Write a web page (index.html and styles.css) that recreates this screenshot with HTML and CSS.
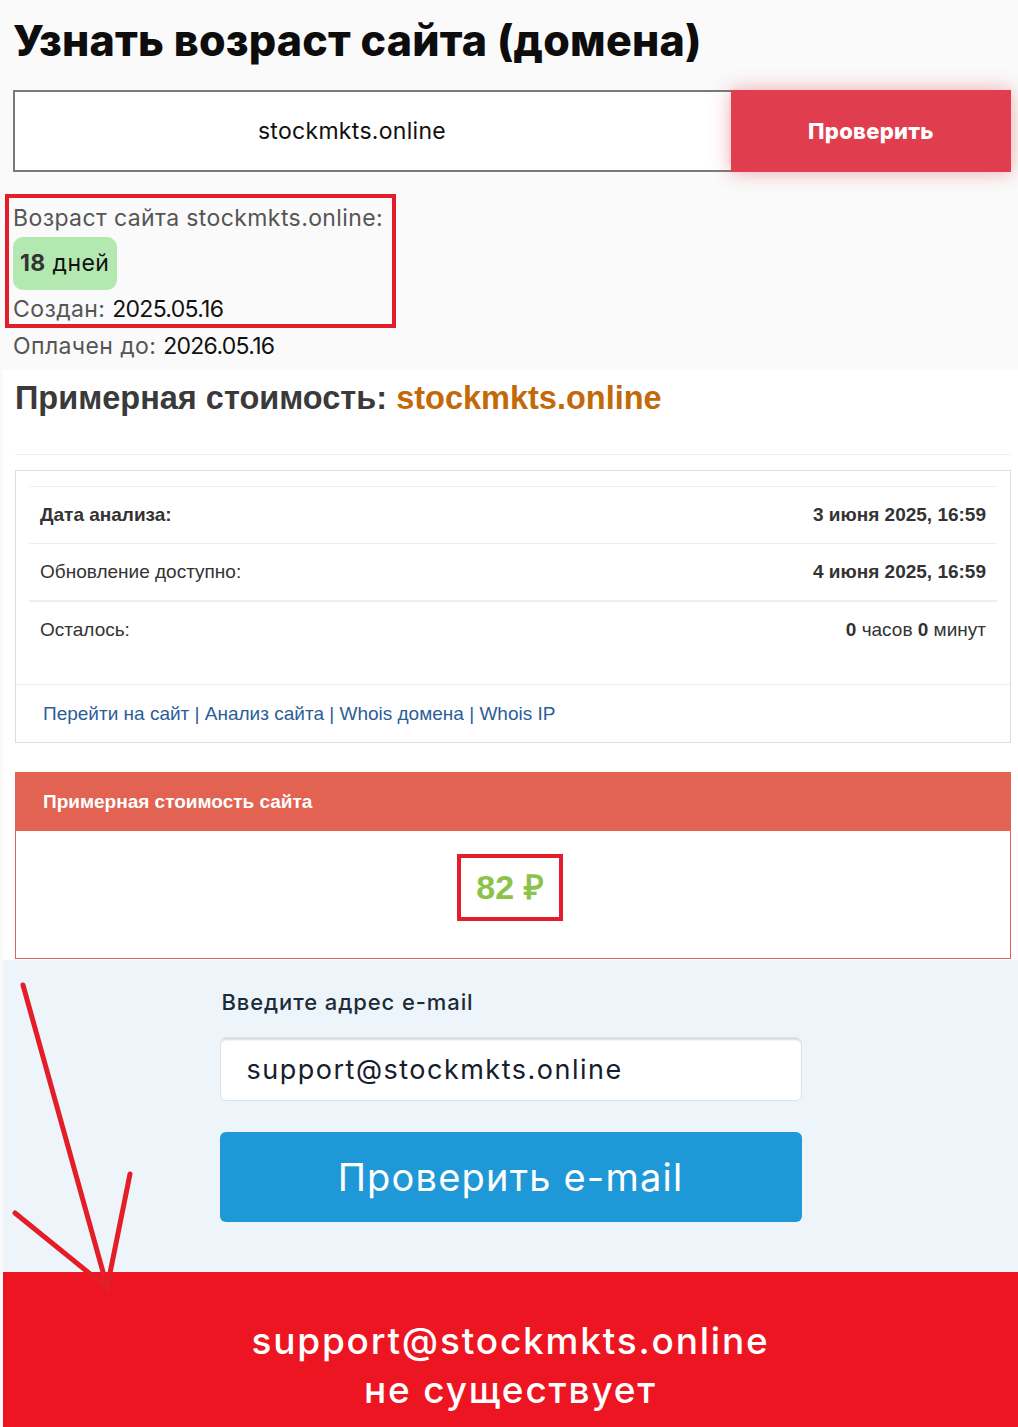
FILE: index.html
```html
<!DOCTYPE html>
<html lang="ru">
<head>
    <meta charset="UTF-8">
    <meta name="viewport" content="width=device-width, initial-scale=1.0">
    <title>Узнать возраст сайта (домена)</title>
    <link rel="stylesheet" href="styles.css">
</head>
<body>
    <div class="page">
        <section class="age-section">
            <h1 class="age-title">Узнать возраст сайта (домена)</h1>

            <form class="domain-form" onsubmit="return false">
                <div class="domain-input">stockmkts.online</div>
                <button class="domain-btn" type="submit">Проверить</button>
            </form>

            <div class="age-box">
                <div class="age-line">Возраст сайта stockmkts.online:</div>
                <div class="age-badge"><b>18</b> дней</div>
                <div class="age-line">Создан: <span class="age-date">2025.05.16</span></div>
            </div>
            <div class="age-line paid">Оплачен до: <span class="age-date">2026.05.16</span></div>
        </section>

        <section class="cost-section">
            <h2 class="cost-title">Примерная стоимость: <span class="cost-domain">stockmkts.online</span></h2>
            <hr class="cost-rule">

            <div class="stats-panel">
                <div class="stats-body">
                    <div class="stats-row strong">
                        <span>Дата анализа:</span>
                        <span class="stats-value">3 июня 2025, 16:59</span>
                    </div>
                    <div class="stats-row">
                        <span>Обновление доступно:</span>
                        <span class="stats-value">4 июня 2025, 16:59</span>
                    </div>
                    <div class="stats-row">
                        <span>Осталось:</span>
                        <span><b>0</b> часов <b>0</b> минут</span>
                    </div>
                </div>
                <div class="stats-links">
                    <a href="#">Перейти на сайт</a> | <a href="#">Анализ сайта</a> | <a href="#">Whois домена</a> | <a href="#">Whois IP</a>
                </div>
            </div>

            <div class="price-card">
                <div class="price-head">Примерная стоимость сайта</div>
                <div class="price-body">
                    <span class="price-value">82 ₽</span>
                </div>
            </div>
        </section>

        <section class="email-section">
            <form class="email-form" onsubmit="return false">
                <label class="email-label" for="email">Введите адрес e-mail</label>
                <div class="email-input" id="email">support@stockmkts.online</div>
                <button class="email-btn" type="submit">Проверить e-mail</button>
            </form>
        </section>

        <section class="email-result">
            <div>support@stockmkts.online</div>
            <div>не существует</div>
        </section>

        <!-- hand-drawn arrow over the page -->
        <svg class="arrow" width="1018" height="1427" viewBox="0 0 1018 1427" aria-hidden="true">
            <g stroke="#e41e28" stroke-width="5" stroke-linecap="round" fill="none">
                <line x1="23" y1="985" x2="108" y2="1290"/>
                <line x1="130" y1="1174" x2="107" y2="1288"/>
                <line x1="15" y1="1213" x2="105" y2="1286"/>
            </g>
        </svg>
    </div>
</body>
</html>
```

FILE: styles.css
```css
body {
    margin: 0;
    background: #fafafa;
    font-family: Inter, "Open Sans", sans-serif;
    color: #111;
}

.page {
    position: relative;
    width: 1018px;
    min-height: 1427px;
    overflow: hidden;
}

/* Age check */
.age-section {
    padding: 0 0 0 13px;
    height: 370px;
    box-sizing: border-box;
}

.age-title {
    margin: 0;
    padding-top: 15px;
    height: 90px;
    box-sizing: border-box;
    font-size: 43px;
    line-height: 50px;
    font-weight: 800;
    letter-spacing: 0.2px;
    color: #0d0d0d;
}

.domain-form {
    display: flex;
    width: 998px;
    height: 82px;
}

.domain-input {
    width: 718px;
    box-sizing: border-box;
    border: 2px solid #7a7a7a;
    border-right: none;
    padding-right: 42px;
    background: #fff;
    display: flex;
    align-items: center;
    justify-content: center;
    font-size: 23px;
    letter-spacing: 0.3px;
    color: #111;
}

.domain-btn {
    width: 280px;
    border: none;
    background: #e03e4e;
    color: #fff;
    font-family: inherit;
    font-size: 22px;
    font-weight: 800;
    letter-spacing: 0.3px;
    box-shadow: 0 0 18px rgba(224, 62, 78, 0.45);
}

.age-box {
    display: inline-block;
    margin: 22px 0 0 -8px;
    padding: 3px 8px 0 4px;
    width: 391px;
    height: 134px;
    box-sizing: border-box;
    border: 4px solid #e31e2a;
}

.age-line {
    font-size: 23px;
    letter-spacing: 0.4px;
    color: #555;
    line-height: 34px;
}

.age-date {
    color: #111;
    letter-spacing: -0.7px;
}

.age-badge {
    display: inline-block;
    margin: 2px 0 2px;
    padding: 0 8px 0 7px;
    height: 53px;
    line-height: 53px;
    border-radius: 10px;
    background: #b3e8b0;
    font-size: 23px;
    letter-spacing: 0.4px;
    color: #111;
}

.age-badge b {
    color: #333;
}

.paid {
    margin-top: 1px;
}

/* Site cost */
.cost-section {
    margin-left: 3px;
    padding: 8px 7px 1px 12px;
    background: #fff;
    font-family: "Liberation Sans", Arial, sans-serif;
}

.cost-title {
    margin: 0;
    font-size: 32.5px;
    line-height: 40px;
    color: #3a3a3a;
}

.cost-domain {
    color: #c26a0a;
}

.cost-rule {
    margin: 36px 0 15px;
    border: none;
    border-top: 1px solid #eee;
}

.stats-panel {
    border: 1px solid #ddd;
    margin-bottom: 29px;
}

.stats-body {
    padding: 15px 13px 26px;
}

.stats-row {
    display: flex;
    justify-content: space-between;
    padding: 0 11px;
    height: 56px;
    align-items: center;
    border-top: 1px solid #eee;
    font-size: 19px;
    color: #333;
}

.stats-row:nth-child(3) {
    border-top-width: 2px;
}

.stats-row.strong span:first-child {
    font-weight: bold;
}

.stats-value {
    font-weight: bold;
}

.stats-links {
    border-top: 1px solid #eee;
    padding: 0 27px;
    height: 57px;
    line-height: 57px;
    font-size: 19px;
    color: #2c5d99;
}

.stats-links a {
    color: #2c5d99;
    text-decoration: none;
}

.price-card {
    border: 1px solid #e36353;
}

.price-head {
    background: #e36353;
    color: #fff;
    font-weight: bold;
    font-size: 19px;
    height: 58px;
    line-height: 58px;
    padding-left: 27px;
}

.price-body {
    height: 127px;
    box-sizing: border-box;
    padding: 23px 6px 0 0;
    display: flex;
    align-items: flex-start;
    justify-content: center;
}

.price-value {
    display: inline-block;
    width: 106px;
    height: 67px;
    line-height: 59px;
    box-sizing: border-box;
    border: 4px solid #e31e2a;
    text-align: center;
    font-size: 34px;
    font-weight: bold;
    color: #8bc34a;
}

/* E-mail check */
.email-section {
    margin-left: 3px;
    height: 312px;
    background: #eef5fa;
    display: flex;
    justify-content: center;
}

.email-form {
    width: 582px;
    padding-top: 29px;
    display: flex;
    flex-direction: column;
}

.email-label {
    padding-left: 2px;
    font-size: 22px;
    font-weight: 500;
    letter-spacing: 0.9px;
    color: #1c2b39;
    line-height: 26px;
}

.email-input {
    margin-top: 22px;
    height: 64px;
    box-sizing: border-box;
    padding-left: 26px;
    display: flex;
    align-items: center;
    background: #fff;
    border: 1px solid #dde3e8;
    border-radius: 6px;
    box-shadow: inset 0 3px 2px -1px #d6d9dc;
    font-size: 27px;
    letter-spacing: 1.5px;
    color: #14202b;
}

.email-btn {
    margin-top: 31px;
    height: 90px;
    border: none;
    border-radius: 6px;
    background: #1e98d6;
    color: #fff;
    font-family: inherit;
    font-size: 38px;
    letter-spacing: 1.2px;
}

.email-result {
    margin-left: 3px;
    height: 156px;
    background: #ee1522;
    color: #fff;
    text-align: center;
    font-size: 37px;
    font-weight: 500;
    letter-spacing: 1.8px;
    line-height: 49px;
    padding-top: 44px;
    box-sizing: border-box;
}

.arrow {
    position: absolute;
    left: 0;
    top: 0;
    pointer-events: none;
}
```
